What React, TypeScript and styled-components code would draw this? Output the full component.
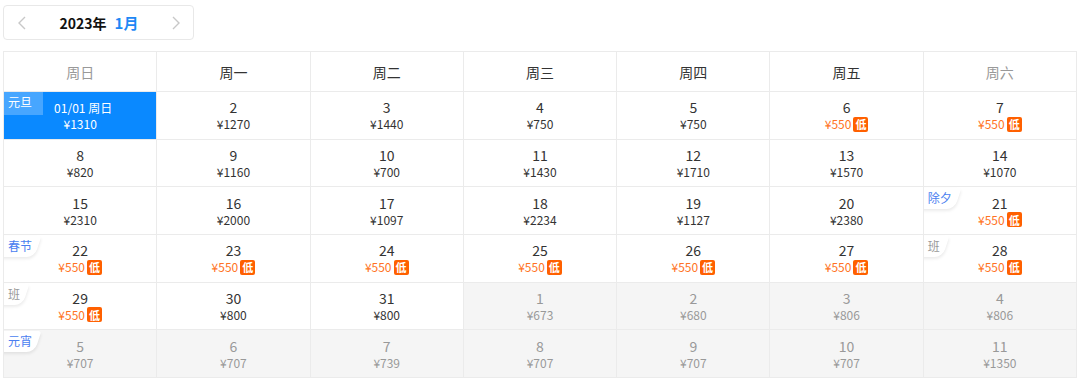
import React from 'react';
import styled, { createGlobalStyle } from 'styled-components';

const GlobalStyle = createGlobalStyle`
  body {
    margin: 0;
    background: #fff;
    font-family: "Noto Sans CJK SC", "Noto Sans", sans-serif;
  }
`;

type Tag = { text: string; kind: 'holiday' | 'work' };

interface Day {
  day: number;
  price: number;
  low?: boolean;
  other?: boolean;
  selected?: boolean;
  tag?: Tag;
}

const WEEK = ['周日', '周一', '周二', '周三', '周四', '周五', '周六'];

const PRICES = [
  1310, 1270, 1440, 750, 750, 550, 550,
  820, 1160, 700, 1430, 1710, 1570, 1070,
  2310, 2000, 1097, 2234, 1127, 2380, 550,
  550, 550, 550, 550, 550, 550, 550,
  550, 800, 800
];
const LOW = new Set([6, 7, 21, 22, 23, 24, 25, 26, 27, 28, 29]);
const TAGS: Record<number, Tag> = {
  1: { text: '元旦', kind: 'holiday' },
  21: { text: '除夕', kind: 'holiday' },
  22: { text: '春节', kind: 'holiday' },
  28: { text: '班', kind: 'work' },
  29: { text: '班', kind: 'work' }
};
const NEXT: [number, number][] = [
  [1, 673], [2, 680], [3, 806], [4, 806], [5, 707], [6, 707],
  [7, 739], [8, 707], [9, 707], [10, 707], [11, 1350]
];
const NEXT_TAGS: Record<number, Tag> = { 5: { text: '元宵', kind: 'holiday' } };

const days: Day[] = [
  ...PRICES.map((price, i) => ({
    day: i + 1,
    price,
    low: LOW.has(i + 1),
    selected: i === 0,
    tag: TAGS[i + 1]
  })),
  ...NEXT.map(([day, price]) => ({ day, price, other: true, tag: NEXT_TAGS[day] }))
];

const Page = styled.div`
  padding: 5px 3px 0 3px;
`;

const Nav = styled.div`
  box-sizing: border-box;
  width: 191px;
  height: 35px;
  border: 1px solid #e8e8e8;
  border-radius: 4px;
  display: flex;
  align-items: center;
  justify-content: space-between;
  padding: 0 13px 0 14px;
`;

const Arrow = styled.span`
  display: flex;
  align-items: center;
  color: #c8c8c8;
`;

const Title = styled.div`
  font-size: 14px;
  font-weight: 700;
  color: #111;
  display: flex;
  align-items: baseline;
  gap: 8px;
`;

const Month = styled.span`
  color: #1e88f5;
  font-size: 15px;
`;

const Grid = styled.div`
  margin-top: 11px;
  width: 1074px;
  height: 327px;
  box-sizing: border-box;
  display: grid;
  grid-template-columns: repeat(7, 1fr);
  grid-template-rows: 40px repeat(6, 1fr);
  border-top: 1px solid #ebebeb;
  border-left: 1px solid #ebebeb;
`;

const Head = styled.div<{ $weekend: boolean }>`
  border-right: 1px solid #ebebeb;
  border-bottom: 1px solid #ebebeb;
  display: flex;
  align-items: center;
  justify-content: center;
  font-size: 14px;
  color: ${(p) => (p.$weekend ? '#999' : '#333')};
`;

const Cell = styled.div<{ $other?: boolean; $selected?: boolean }>`
  position: relative;
  overflow: hidden;
  border-right: 1px solid #ebebeb;
  border-bottom: 1px solid #ebebeb;
  display: flex;
  flex-direction: column;
  align-items: center;
  justify-content: center;
  padding-top: 1px;
  background: ${(p) => (p.$selected ? '#0a89ff' : p.$other ? '#f5f5f5' : '#fff')};
  color: ${(p) => (p.$selected ? '#fff' : p.$other ? '#999' : '#333')};
`;

const DayNum = styled.div<{ $small?: boolean }>`
  font-size: ${(p) => (p.$small ? '12px' : '14px')};
  line-height: 17px;
  padding-left: ${(p) => (p.$small ? '6px' : '0')};
`;

const Price = styled.div<{ $low?: boolean }>`
  display: flex;
  align-items: center;
  gap: 2px;
  font-size: 12px;
  line-height: 16px;
  color: ${(p) => (p.$low ? '#ff7324' : 'inherit')};
`;

const LowBadge = styled.span`
  display: inline-flex;
  align-items: center;
  justify-content: center;
  width: 15px;
  height: 15px;
  border-radius: 2px;
  background: #ff6000;
  color: #fff;
  font-size: 11px;
  font-weight: 700;
`;

const HolidayTag = styled.span<{ $kind: 'holiday' | 'work' }>`
  position: absolute;
  top: 1px;
  left: 0;
  z-index: 0;
  padding: 1px 10px 3px 4px;
  font-size: 12px;
  line-height: 17px;
  color: ${(p) => (p.$kind === 'work' ? '#999' : '#4a7ef0')};

  &::before {
    content: '';
    position: absolute;
    z-index: -1;
    inset: 0 4px 0 -6px;
    background: #fff;
    border-radius: 0 3px 8px 0;
    transform: skewX(-18deg);
    box-shadow: 1px 2px 3px rgba(0, 0, 0, 0.08);
  }
`;

const SelectedTag = styled.span`
  position: absolute;
  top: 0;
  left: 0;
  width: 39px;
  height: 23px;
  padding-left: 4px;
  box-sizing: border-box;
  background: rgba(255, 255, 255, 0.25);
  color: #fff;
  font-size: 12px;
  line-height: 20px;
`;

function Chevron ({ dir }: { dir: 'left' | 'right' }) {
  return (
    <svg width='8' height='14' viewBox='0 0 8 14'>
      <path
        d={dir === 'left' ? 'M7 1 L1 7 L7 13' : 'M1 1 L7 7 L1 13'}
        fill='none'
        stroke='currentColor'
        strokeWidth='1.4'
      />
    </svg>
  );
}

function DayCell ({ d }: { d: Day }) {
  return (
    <Cell $other={d.other} $selected={d.selected}>
      {d.tag && (d.selected
        ? <SelectedTag>{d.tag.text}</SelectedTag>
        : <HolidayTag $kind={d.tag.kind}>{d.tag.text}</HolidayTag>)}
      <DayNum $small={d.selected}>{d.selected ? '01/01 周日' : d.day}</DayNum>
      <Price $low={d.low}>
        ¥{d.price}
        {d.low && <LowBadge>低</LowBadge>}
      </Price>
    </Cell>
  );
}

export default function App () {
  return (
    <Page>
      <GlobalStyle />
      <Nav>
        <Arrow><Chevron dir='left' /></Arrow>
        <Title>2023年<Month>1月</Month></Title>
        <Arrow><Chevron dir='right' /></Arrow>
      </Nav>
      <Grid>
        {WEEK.map((w, i) => (
          <Head $weekend={i === 0 || i === 6} key={w}>{w}</Head>
        ))}
        {days.map((d, i) => <DayCell d={d} key={i} />)}
      </Grid>
    </Page>
  );
}
